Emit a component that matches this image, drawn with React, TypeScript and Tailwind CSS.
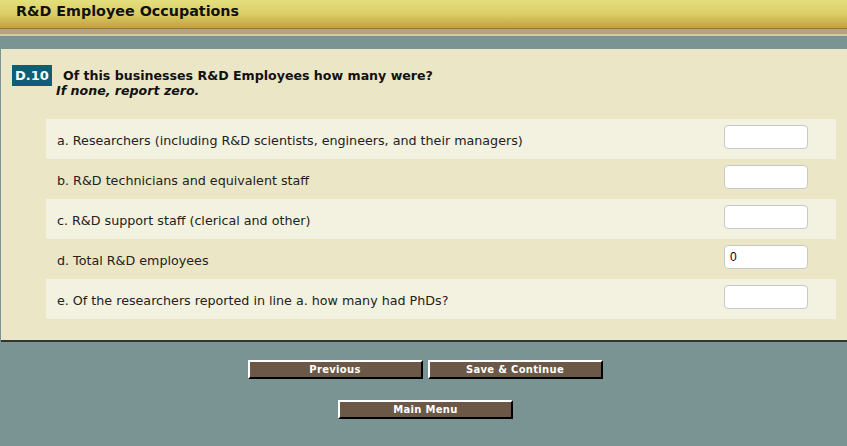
import React from 'react';

type Row = { label: string; value: string };

const ROWS: Row[] = [
  { label: 'a. Researchers (including R&D scientists, engineers, and their managers)', value: '' },
  { label: 'b. R&D technicians and equivalent staff', value: '' },
  { label: 'c. R&D support staff (clerical and other)', value: '' },
  { label: 'd. Total R&D employees', value: '0' },
  { label: 'e. Of the researchers reported in line a. how many had PhDs?', value: '' },
];

const NavButton: React.FC<{ label: string }> = ({ label }) => (
  <button className="w-[175px] h-[19px] bg-[#6b5847] border-t-2 border-l-2 border-t-white border-l-white border-b-2 border-r-2 border-b-black border-r-black text-white text-[10px] font-bold leading-none tracking-[0.3px]">
    {label}
  </button>
);

const App: React.FC = () => {
  return (
    <div className="w-[847px] h-[446px] bg-[#7a9393] flex flex-col font-['Verdana','DejaVu_Sans',sans-serif] overflow-hidden">
      {/* title bar */}
      <div className="h-[28px] bg-gradient-to-b from-[#e3df7c] via-[#dccd68] to-[#c3a03c] pl-[16px] flex items-start">
        <h1 className="text-[14.3px] font-bold text-[#111] pt-[3px] leading-[17px]">R&amp;D Employee Occupations</h1>
      </div>
      <div className="h-[1px] bg-[#8e7a3c]" />
      <div className="h-[5px] bg-[#b5a47e]" />
      <div className="h-[2px] bg-[#d9c9a2]" />
      <div className="h-[13px]" />

      {/* question panel */}
      <div className="ml-[1px] h-[293px] bg-[#ebe6c5] border-b-2 border-b-[#333] pt-[16px]">
        <div className="flex items-start pl-[11px]">
          <span className="w-[40px] h-[21px] bg-[#0e5e74] text-white text-[13px] font-bold flex items-center justify-center">D.10</span>
          <div className="pl-[11px] pt-[3px]">
            <p className="text-[12.6px] font-bold text-[#111] leading-[15px]">Of this businesses R&amp;D Employees how many were?</p>
            <p className="text-[12.6px] font-bold italic text-[#111] leading-[15px] -ml-[7px]">If none, report zero.</p>
          </div>
        </div>

        <div className="mt-[21px] ml-[45px] w-[790px] flex flex-col">
          {ROWS.map((row, i) => (
            <div
              key={row.label}
              className={`h-[40px] flex items-center justify-between pl-[11px] pr-[28px] ${i % 2 === 0 ? 'bg-[#f3f1df]' : ''}`}
            >
              <span className="text-[12.7px] text-[#222] pt-[4px]">{row.label}</span>
              <input
                readOnly
                value={row.value}
                className="w-[84px] h-[24px] bg-white border border-[#c8c8c8] rounded-[4px] px-[5px] text-[12px] text-black font-['Arial','Liberation_Sans',sans-serif] -mt-[4px]"
              />
            </div>
          ))}
        </div>
      </div>

      {/* buttons */}
      <div className="flex flex-col items-center pt-[18px] gap-[21px] pl-[4px]">
        <div className="flex gap-[5px] -ml-[1px]">
          <NavButton label="Previous" />
          <NavButton label="Save & Continue" />
        </div>
        <NavButton label="Main Menu" />
      </div>
    </div>
  );
};

export default App;
